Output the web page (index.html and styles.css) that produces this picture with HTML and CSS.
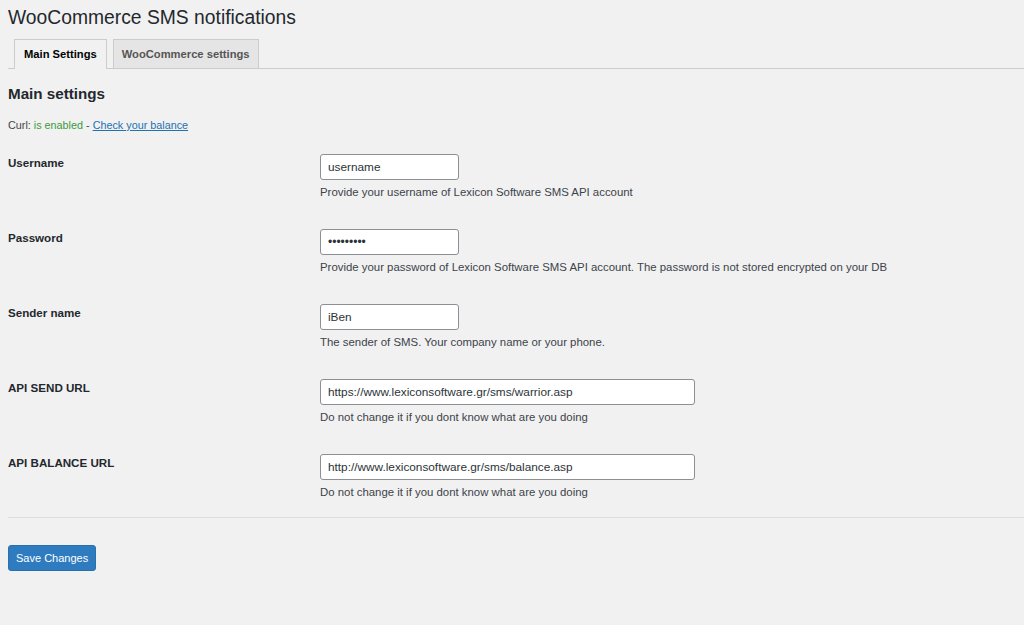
FILE: index.html
```html
<!DOCTYPE html>
<html>
<head>
<meta charset="utf-8">
<link rel="stylesheet" href="styles.css">
</head>
<body>
<div class="wrap">
  <h1 class="title">WooCommerce SMS notifications</h1>
  <nav class="tabs">
    <a class="tab active">Main Settings</a>
    <a class="tab">WooCommerce settings</a>
  </nav>
  <h2 class="section">Main settings</h2>
  <p class="curl">Curl: <span class="ok">is enabled</span> - <a class="link">Check your balance</a></p>
  <div class="form">
    <div class="row">
      <div class="label">Username</div>
      <div class="field">
        <div class="input short">username</div>
        <p class="desc">Provide your username of Lexicon Software SMS API account</p>
      </div>
    </div>
    <div class="row">
      <div class="label">Password</div>
      <div class="field">
        <div class="input short dots">•••••••••</div>
        <p class="desc">Provide your password of Lexicon Software SMS API account. The password is not stored encrypted on your DB</p>
      </div>
    </div>
    <div class="row">
      <div class="label">Sender name</div>
      <div class="field">
        <div class="input short">iBen</div>
        <p class="desc">The sender of SMS. Your company name or your phone.</p>
      </div>
    </div>
    <div class="row">
      <div class="label">API SEND URL</div>
      <div class="field">
        <div class="input long">https://www.lexiconsoftware.gr/sms/warrior.asp</div>
        <p class="desc">Do not change it if you dont know what are you doing</p>
      </div>
    </div>
    <div class="row">
      <div class="label">API BALANCE URL</div>
      <div class="field">
        <div class="input long">http://www.lexiconsoftware.gr/sms/balance.asp</div>
        <p class="desc">Do not change it if you dont know what are you doing</p>
      </div>
    </div>
  </div>
  <hr class="sep">
  <button class="save">Save Changes</button>
</div>
</body>
</html>
```
FILE: styles.css
```css
html, body {
  margin: 0;
  padding: 0;
  background: #f1f1f1;
  height: 100%;
}
body {
  font-family: "Liberation Sans", Arial, sans-serif;
  color: #23282d;
  font-size: 11.4px;
}
.wrap {
  padding: 0 0 0 8px;
}
.title {
  margin: 0;
  padding: 6px 0 0 0;
  font-size: 19.3px;
  font-weight: 400;
  line-height: 23px;
  color: #23282d;
}
.tabs {
  display: flex;
  gap: 6px;
  margin-top: 10px;
  padding-left: 6px;
  border-bottom: 1px solid #ccc;
  height: 29px;
  align-items: flex-end;
}
.tab {
  display: block;
  box-sizing: border-box;
  height: 29px;
  padding: 0 8px;
  line-height: 28px;
  font-size: 11.2px;
  font-weight: 700;
  color: #555;
  background: #e5e5e5;
  border: 1px solid #ccc;
  border-bottom: none;
}
.tab.active {
  background: #f1f1f1;
  color: #000;
  height: 30px;
  margin-bottom: -1px;
  line-height: 29px;
  padding: 0 9px;
}
.section {
  margin: 16px 0 0 0;
  font-size: 15.2px;
  font-weight: 700;
  line-height: 18px;
  color: #23282d;
}
.curl {
  margin: 15px 0 0 0;
  line-height: 14px;
  font-size: 10.8px;
  color: #444;
}
.ok { color: #3a9a3a; }
.link { color: #2271b1; text-decoration: underline; }
.form {
  margin-top: 22px;
}
.row {
  display: flex;
  height: 75px;
}
.row:last-child {
  height: 63px;
}
.label {
  width: 312px;
  font-weight: 700;
  font-size: 11.6px;
  padding-top: 2px;
  line-height: 14px;
}
.field {
  display: flex;
  flex-direction: column;
}
.input {
  box-sizing: border-box;
  height: 26px;
  border: 1px solid #8c8f94;
  border-radius: 3px;
  background: #fff;
  padding: 0 7px;
  line-height: 24px;
  font-size: 11.8px;
  color: #2c3338;
}
.input.short { width: 139px; }
.input.long { width: 375px; }
.dots { font-size: 12px; }
.desc {
  margin: 5px 0 0 0;
  line-height: 14px;
  color: #3c434a;
}
.sep {
  border: none;
  border-top: 1px solid #ddd;
  margin: 0;
}
.save {
  margin-top: 27px;
  height: 26px;
  padding: 0 7px;
  background: #2f7bbf;
  border: 1px solid #2a6fae;
  border-radius: 3px;
  color: #fff;
  font-family: "Liberation Sans", Arial, sans-serif;
  font-size: 11px;
  line-height: 24px;
}
```
